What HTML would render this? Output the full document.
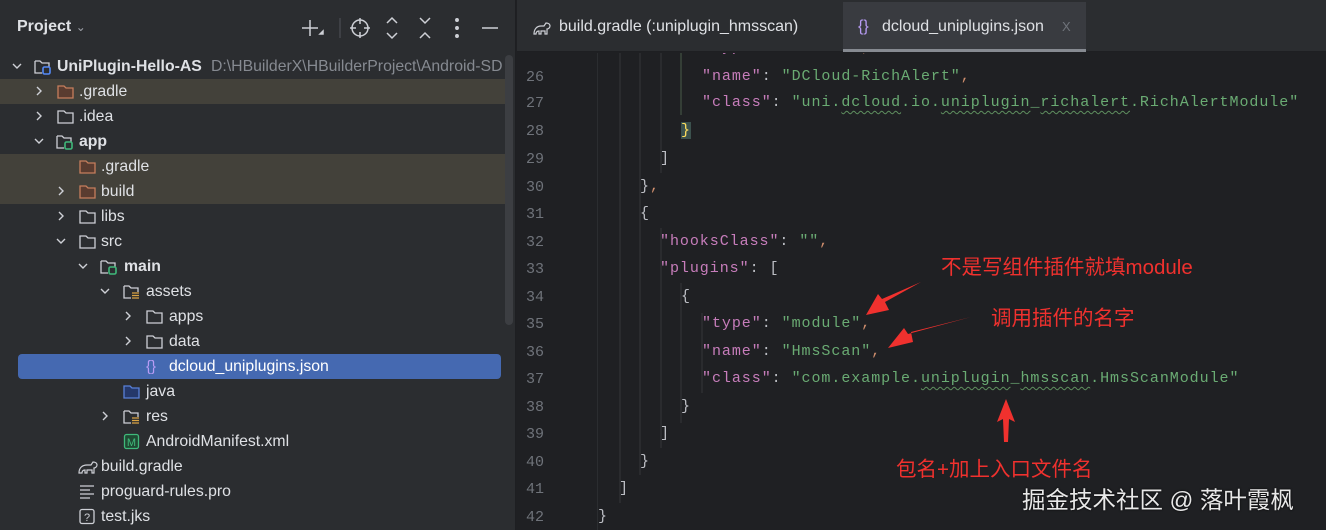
<!DOCTYPE html>
<html><head><meta charset="utf-8">
<style>
*{margin:0;padding:0;box-sizing:border-box}
body{width:1326px;height:530px;overflow:hidden;background:#1f2023;position:relative;font-family:"Liberation Sans","Noto Sans CJK SC",sans-serif}
#left{position:absolute;left:0;top:0;width:516px;height:530px;background:#2b2d30;border-right:1px solid #1e1f22}
.hdr{position:absolute;left:17px;top:18px;color:#dfe1e5;font-weight:bold;font-size:16px}
.row{position:absolute;left:0;width:505px;height:25px;color:#dfe1e5;font-size:15.8px;line-height:25px;white-space:nowrap}
.row span.t{position:absolute}
.ex{background:#43413a}
.sel{background:#4569b1;left:18px!important;width:483px!important;border-radius:4px}
.row svg{position:absolute;top:0}
#tabs{position:absolute;left:517px;top:0;width:809px;height:52px;background:#2b2d30;border-bottom:1px solid #1e1f22}
.tab{position:absolute;top:0;height:52px;line-height:54px;color:#dfe1e5;font-size:16px}
#ed{position:absolute;left:517px;top:53px;width:809px;height:477px;background:#1f2023;overflow:hidden}
.ln{position:absolute;left:-3px;width:30px;text-align:right;color:#6f737a;font-family:"Liberation Mono",monospace;font-size:15px}
.cl{position:absolute;left:81px;font-family:"Liberation Mono",monospace;font-size:15px;letter-spacing:0.95px;color:#bcbec4;white-space:pre}
.k{color:#c77dbb}.s{color:#6aab73}.p{color:#cf8e6d}
.w{text-decoration:underline wavy #5f8f5f;text-underline-offset:4px;text-decoration-thickness:1px}
.ann{position:absolute;color:#f0312e;font-size:20.5px;white-space:nowrap}
</style></head><body>
<div id="left">
  <div class="hdr">Project <span style="font-weight:normal;color:#9da0a8;font-size:12px">&#8964;</span></div>
  <svg style="position:absolute;left:300px;top:12px" width="210" height="30" viewBox="0 0 210 30" fill="none" stroke="#ced0d6" stroke-width="1.5">
    <path d="M10 8v16M2 16h16"/><path d="M20 22l3-3v3z" fill="#ced0d6"/>
    <line x1="40" y1="6" x2="40" y2="26" stroke="#45474c"/>
    <circle cx="60" cy="16" r="8"/><path d="M60 6v6M60 20v6M50 16h6M64 16h6"/>
    <path d="M87 11l5-5 5 5M87 21l5 5 5-5"/>
    <path d="M120 6l5 5 5-5M120 26l5-5 5 5"/>
    <circle cx="157" cy="8" r="1.2" fill="#ced0d6"/><circle cx="157" cy="16" r="1.2" fill="#ced0d6"/><circle cx="157" cy="24" r="1.2" fill="#ced0d6"/>
    <path d="M182 16h16"/>
  </svg>
  <div style="position:absolute;left:505px;top:55px;width:8px;height:270px;background:#3c3e42;border-radius:4px"></div>

  <div class="row" style="top:54px">
    <svg style="left:10px" width="14" height="25"><path d="M3 10l4 4 4-4" stroke="#ced0d6" fill="none" stroke-width="1.4"/></svg>
    <svg style="left:33px" width="20" height="25"><path d="M2 7h5l2 2h7v4M2 7v12h7" stroke="#ced0d6" fill="none" stroke-width="1.3"/><rect x="10" y="13" width="7" height="7" rx="1.5" stroke="#548af7" stroke-width="1.6" fill="none"/></svg>
    <span class="t" style="left:57px;font-weight:bold">UniPlugin-Hello-AS</span>
    <span class="t" style="left:211px;color:#868a91">D:\HBuilderX\HBuilderProject\Android-SD</span>
  </div>
  <div class="row ex" style="top:79px">
    <svg style="left:32px" width="14" height="25"><path d="M5 8l4 4-4 4" stroke="#ced0d6" fill="none" stroke-width="1.4"/></svg>
    <svg style="left:56px" width="20" height="25"><path d="M2 7h6l2 2h7v10H2z" fill="#5a3c30" stroke="#c57e5c" stroke-width="1.3"/></svg>
    <span class="t" style="left:79px">.gradle</span>
  </div>
  <div class="row" style="top:104px">
    <svg style="left:32px" width="14" height="25"><path d="M5 8l4 4-4 4" stroke="#ced0d6" fill="none" stroke-width="1.4"/></svg>
    <svg style="left:56px" width="20" height="25"><path d="M2 7h6l2 2h7v10H2z" fill="none" stroke="#ced0d6" stroke-width="1.3"/></svg>
    <span class="t" style="left:79px">.idea</span>
  </div>
  <div class="row" style="top:129px">
    <svg style="left:32px" width="14" height="25"><path d="M3 10l4 4 4-4" stroke="#ced0d6" fill="none" stroke-width="1.4"/></svg>
    <svg style="left:55px" width="20" height="25"><path d="M2 7h5l2 2h7v4M2 7v12h7" stroke="#ced0d6" fill="none" stroke-width="1.3"/><rect x="10" y="13" width="7" height="7" rx="1.5" stroke="#3fb97a" stroke-width="1.6" fill="none"/></svg>
    <span class="t" style="left:79px;font-weight:bold">app</span>
  </div>
  <div class="row ex" style="top:154px">
    <svg style="left:78px" width="20" height="25"><path d="M2 7h6l2 2h7v10H2z" fill="#5a3c30" stroke="#c57e5c" stroke-width="1.3"/></svg>
    <span class="t" style="left:101px">.gradle</span>
  </div>
  <div class="row ex" style="top:179px">
    <svg style="left:54px" width="14" height="25"><path d="M5 8l4 4-4 4" stroke="#ced0d6" fill="none" stroke-width="1.4"/></svg>
    <svg style="left:78px" width="20" height="25"><path d="M2 7h6l2 2h7v10H2z" fill="#5a3c30" stroke="#c57e5c" stroke-width="1.3"/></svg>
    <span class="t" style="left:101px">build</span>
  </div>
  <div class="row" style="top:204px">
    <svg style="left:54px" width="14" height="25"><path d="M5 8l4 4-4 4" stroke="#ced0d6" fill="none" stroke-width="1.4"/></svg>
    <svg style="left:78px" width="20" height="25"><path d="M2 7h6l2 2h7v10H2z" fill="none" stroke="#ced0d6" stroke-width="1.3"/></svg>
    <span class="t" style="left:101px">libs</span>
  </div>
  <div class="row" style="top:229px">
    <svg style="left:54px" width="14" height="25"><path d="M3 10l4 4 4-4" stroke="#ced0d6" fill="none" stroke-width="1.4"/></svg>
    <svg style="left:78px" width="20" height="25"><path d="M2 7h6l2 2h7v10H2z" fill="none" stroke="#ced0d6" stroke-width="1.3"/></svg>
    <span class="t" style="left:101px">src</span>
  </div>
  <div class="row" style="top:254px">
    <svg style="left:76px" width="14" height="25"><path d="M3 10l4 4 4-4" stroke="#ced0d6" fill="none" stroke-width="1.4"/></svg>
    <svg style="left:99px" width="20" height="25"><path d="M2 7h5l2 2h7v4M2 7v12h7" stroke="#ced0d6" fill="none" stroke-width="1.3"/><rect x="10" y="13" width="7" height="7" rx="1.5" stroke="#3fb97a" stroke-width="1.6" fill="none"/></svg>
    <span class="t" style="left:124px;font-weight:bold">main</span>
  </div>
  <div class="row" style="top:279px">
    <svg style="left:98px" width="14" height="25"><path d="M3 10l4 4 4-4" stroke="#ced0d6" fill="none" stroke-width="1.4"/></svg>
    <svg style="left:122px" width="20" height="25"><path d="M2 7h5l2 2h7v4M2 7v12h7" stroke="#ced0d6" fill="none" stroke-width="1.3"/><path d="M10 14h7M10 16.5h7M10 19h7" stroke="#d9a343" stroke-width="1.3"/></svg>
    <span class="t" style="left:146px">assets</span>
  </div>
  <div class="row" style="top:304px">
    <svg style="left:121px" width="14" height="25"><path d="M5 8l4 4-4 4" stroke="#ced0d6" fill="none" stroke-width="1.4"/></svg>
    <svg style="left:145px" width="20" height="25"><path d="M2 7h6l2 2h7v10H2z" fill="none" stroke="#ced0d6" stroke-width="1.3"/></svg>
    <span class="t" style="left:169px">apps</span>
  </div>
  <div class="row" style="top:329px">
    <svg style="left:121px" width="14" height="25"><path d="M5 8l4 4-4 4" stroke="#ced0d6" fill="none" stroke-width="1.4"/></svg>
    <svg style="left:145px" width="20" height="25"><path d="M2 7h6l2 2h7v10H2z" fill="none" stroke="#ced0d6" stroke-width="1.3"/></svg>
    <span class="t" style="left:169px">data</span>
  </div>
  <div class="row sel" style="top:354px">
    <span class="t" style="left:128px;color:#b89cf5;font-size:15px">{}</span>
    <span class="t" style="left:151px;color:#fff">dcloud_uniplugins.json</span>
  </div>
  <div class="row" style="top:379px">
    <svg style="left:122px" width="20" height="25"><path d="M2 7h6l2 2h7v10H2z" fill="#25386a" stroke="#5880d8" stroke-width="1.3"/></svg>
    <span class="t" style="left:146px">java</span>
  </div>
  <div class="row" style="top:404px">
    <svg style="left:98px" width="14" height="25"><path d="M5 8l4 4-4 4" stroke="#ced0d6" fill="none" stroke-width="1.4"/></svg>
    <svg style="left:122px" width="20" height="25"><path d="M2 7h5l2 2h7v4M2 7v12h7" stroke="#ced0d6" fill="none" stroke-width="1.3"/><path d="M10 14h7M10 16.5h7M10 19h7" stroke="#d9a343" stroke-width="1.3"/></svg>
    <span class="t" style="left:146px">res</span>
  </div>
  <div class="row" style="top:429px">
    <svg style="left:123px" width="18" height="25"><rect x="1.5" y="5.5" width="14" height="14" rx="2" fill="#1f4a33" stroke="#3fb97a" stroke-width="1.3"/><text x="8.5" y="17" fill="#3fb97a" font-size="11" text-anchor="middle" font-family="Liberation Sans">M</text></svg>
    <span class="t" style="left:146px">AndroidManifest.xml</span>
  </div>
  <div class="row" style="top:454px">
    <svg style="left:77px" width="22" height="25"><path d="M2 19c0-5 3-8 8-8h4l2-3c2 0 4 1 4 3s-2 3-3 3v5h-2v-3h-5v3H8v-3c-2 0-3 1-3 3z" fill="none" stroke="#ced0d6" stroke-width="1.2"/></svg>
    <span class="t" style="left:101px">build.gradle</span>
  </div>
  <div class="row" style="top:479px">
    <svg style="left:78px" width="20" height="25"><path d="M2 7h14M2 11h10M2 15h14M2 19h10" stroke="#ced0d6" stroke-width="1.3"/></svg>
    <span class="t" style="left:101px">proguard-rules.pro</span>
  </div>
  <div class="row" style="top:504px">
    <svg style="left:78px" width="20" height="25"><rect x="2" y="5.5" width="14" height="14" rx="2" fill="none" stroke="#ced0d6" stroke-width="1.3"/><text x="9" y="17" fill="#ced0d6" font-size="11" text-anchor="middle" font-family="Liberation Sans">?</text></svg>
    <span class="t" style="left:101px">test.jks</span>
  </div>
</div>

<div id="tabs">
  <div class="tab" style="left:16px">
    <svg style="position:absolute;left:0;top:17px" width="20" height="20"><path d="M1 17c0-5 3-8 7-8h3l2-3c2 0 4 1 4 3s-2 3-3 3v5h-2v-3H8v3H6v-3c-2 0-3 1-3 3z" fill="none" stroke="#ced0d6" stroke-width="1.2"/></svg>
    <span style="position:absolute;left:26px;white-space:nowrap">build.gradle&nbsp;(:uniplugin_hmsscan)</span>
  </div>
  <div style="position:absolute;left:326px;top:2px;width:243px;height:50px;background:#393b40;border-bottom:3px solid #868a91"></div>
  <div class="tab" style="left:341px">
    <span style="position:absolute;left:0;color:#b89cf5">{}</span>
    <span style="position:absolute;left:24px;width:200px">dcloud_uniplugins.json</span>
    <span style="position:absolute;left:204px;color:#6f737a;font-size:13px">X</span>
  </div>
</div>

<div id="ed">
  <div style="position:absolute;left:80px;top:0;width:1px;height:477px;background:#2b2d30"></div>
  <svg style="position:absolute;left:0;top:0" width="809" height="477">
    <g stroke="#34363a" stroke-width="1">
      <line x1="103" y1="0" x2="103" y2="450"/>
      <line x1="123" y1="0" x2="123" y2="422"/>
      <line x1="144" y1="0" x2="144" y2="120"/>
      <line x1="144" y1="175" x2="144" y2="395"/>
      <line x1="164" y1="230" x2="164" y2="370"/>
      <line x1="185" y1="260" x2="185" y2="340"/>
    </g>
    <line x1="164" y1="0" x2="164" y2="62" stroke="#4a5d4a"/>
  </svg>
  <div class="cl" style="top:-14px;left:185px"><span class="k">"type"</span>: <span class="s">"module"</span><span class="p">,</span></div>
</div>

<div style="position:absolute;left:517px;top:53px;width:809px">
<div class="ln" style="top:16px">26</div><div class="cl" style="top:15px;left:185px"><span class="k">"name"</span>: <span class="s">"DCloud-RichAlert"</span><span class="p">,</span></div>
<div class="ln" style="top:42px">27</div><div class="cl" style="top:41px;left:185px"><span class="k">"class"</span>: <span class="s">"uni.<span class="w">dcloud</span>.io.<span class="w">uniplugin</span>_<span class="w">richalert</span>.RichAlertModule"</span></div>
<div class="ln" style="top:70px">28</div><div class="cl" style="top:69px;left:164px"><span style="color:#fede5d;background:#3b514d">}</span></div>
<div class="ln" style="top:98px">29</div><div class="cl" style="top:97px;left:143px">]</div>
<div class="ln" style="top:126px">30</div><div class="cl" style="top:125px;left:123px">}<span class="p">,</span></div>
<div class="ln" style="top:153px">31</div><div class="cl" style="top:152px;left:123px">{</div>
<div class="ln" style="top:181px">32</div><div class="cl" style="top:180px;left:143px"><span class="k">"hooksClass"</span>: <span class="s">""</span><span class="p">,</span></div>
<div class="ln" style="top:208px">33</div><div class="cl" style="top:207px;left:143px"><span class="k">"plugins"</span>: [</div>
<div class="ln" style="top:236px">34</div><div class="cl" style="top:235px;left:164px">{</div>
<div class="ln" style="top:263px">35</div><div class="cl" style="top:262px;left:185px"><span class="k">"type"</span>: <span class="s">"module"</span><span class="p">,</span></div>
<div class="ln" style="top:291px">36</div><div class="cl" style="top:290px;left:185px"><span class="k">"name"</span>: <span class="s">"HmsScan"</span><span class="p">,</span></div>
<div class="ln" style="top:318px">37</div><div class="cl" style="top:317px;left:185px"><span class="k">"class"</span>: <span class="s">"com.example.<span class="w">uniplugin</span>_<span class="w">hmsscan</span>.HmsScanModule"</span></div>
<div class="ln" style="top:346px">38</div><div class="cl" style="top:345px;left:164px">}</div>
<div class="ln" style="top:373px">39</div><div class="cl" style="top:372px;left:143px">]</div>
<div class="ln" style="top:401px">40</div><div class="cl" style="top:400px;left:123px">}</div>
<div class="ln" style="top:428px">41</div><div class="cl" style="top:427px;left:102px">]</div>
<div class="ln" style="top:456px">42</div><div class="cl" style="top:455px;left:81px">}</div>
</div>

<div class="ann" style="left:941px;top:250px">不是写组件插件就填module</div>
<div class="ann" style="left:991px;top:301px">调用插件的名字</div>
<div class="ann" style="left:896px;top:452px">包名+加上入口文件名</div>
<svg style="position:absolute;left:0;top:0" width="1326" height="530">
  <polygon points="921,282 885,302 889,310 866,315 878,294 882,299" fill="#f0312e"/>
  <polygon points="971,317 911,332 913,342 888,348 904,328 908,334" fill="#f0312e"/>
  <polygon points="1006,399 1015,422 1009,419 1008,442 1004,442 1003,419 997,422" fill="#f0312e"/>
</svg>
<div style="position:absolute;left:1022px;top:481px;color:#e8e8e8;font-size:23.5px;white-space:nowrap;text-shadow:0 0 2px #000">掘金技术社区 @ 落叶霞枫</div>
</body></html>
